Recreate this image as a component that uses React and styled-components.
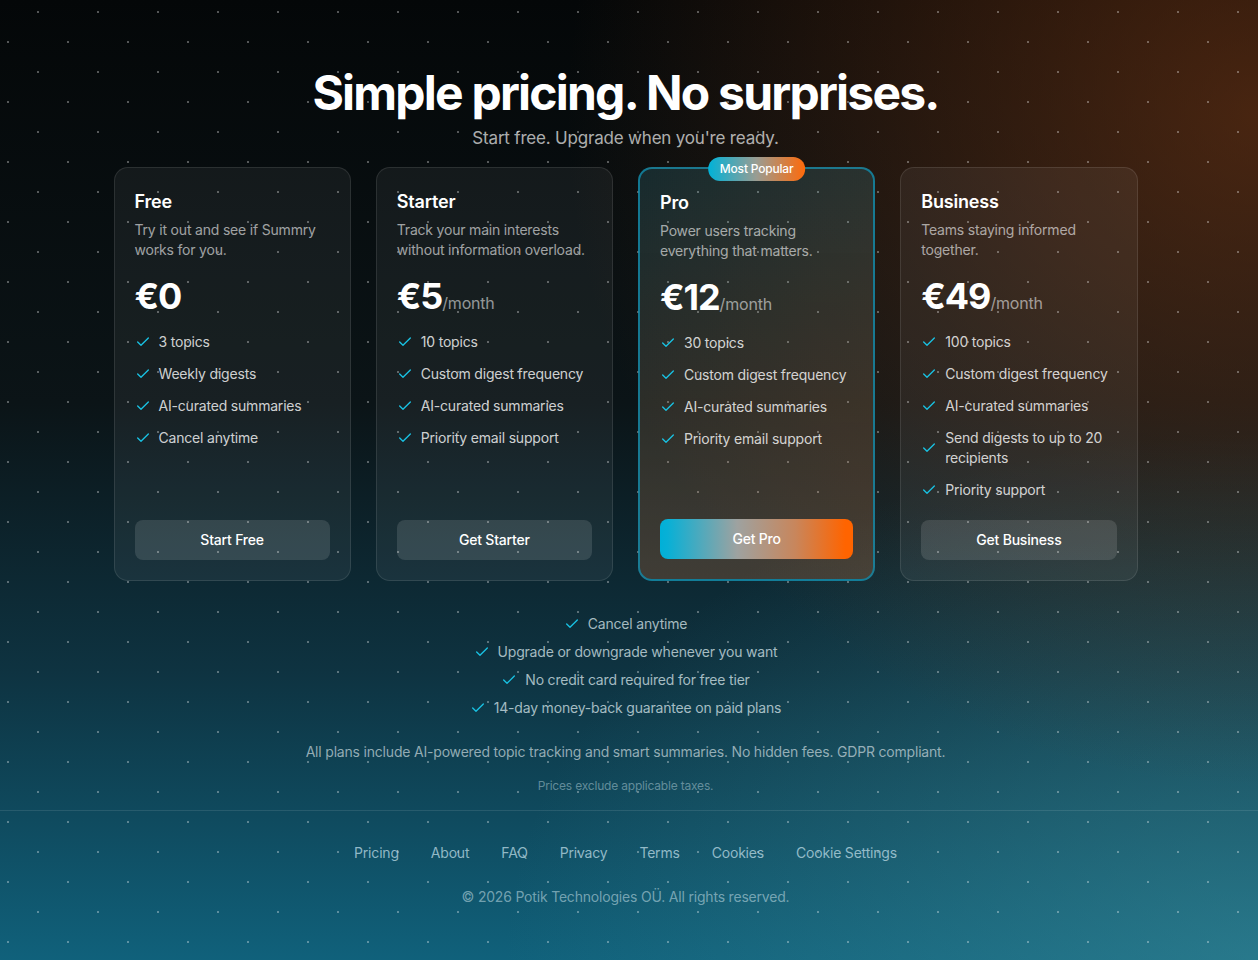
import React from "react";
import styled, { createGlobalStyle } from "styled-components";

const GlobalStyle = createGlobalStyle`
  * {
    box-sizing: border-box;
  }
  html, body {
    margin: 0;
    padding: 0;
    background: #05090b;
  }
  body {
    font-family: Inter, "Noto Sans", "Liberation Sans", sans-serif;
    letter-spacing: -0.012em;
    color: #fff;
    -webkit-font-smoothing: antialiased;
  }
`;

const Page = styled.div`
  min-height: 100vh;
  display: flex;
  flex-direction: column;
  padding-right: 7px;
  background-color: #05090b;
  background-image:
    radial-gradient(circle at center, rgba(255, 255, 255, 0.32) 1px, transparent 1.2px),
    radial-gradient(circle at center, rgba(255, 255, 255, 0.32) 1px, transparent 1.2px),
    radial-gradient(ellipse 55% 70% at 100% 12%, rgba(120, 56, 20, 0.58), transparent 100%),
    radial-gradient(ellipse 60% 55% at 100% 100%, rgba(70, 150, 160, 0.45), transparent 100%),
    linear-gradient(180deg, #040708 0%, #0b1417 42%, #0e3341 70%, #10617b 100%);
  background-size: 60px 60px, 60px 60px, 100% 100%, 100% 100%, 100% 100%;
  background-position: 8px -18px, -22px 12px, 0 0, 0 0, 0 0;
`;

const Main = styled.main`
  width: 100%;
  max-width: 1024px;
  margin: 0 auto;
  padding-top: 64px;
  display: flex;
  flex-direction: column;
  align-items: center;
`;

const Title = styled.h1`
  margin: 0;
  font-size: 48px;
  line-height: 1.2;
  font-weight: 700;
  letter-spacing: -0.037em;
  text-align: center;
`;

const Subtitle = styled.p`
  margin: 2px 0 0;
  font-size: 17px;
  line-height: 28px;
  color: rgba(255, 255, 255, 0.68);
  text-align: center;
`;

const Grid = styled.div`
  width: 100%;
  margin-top: 15px;
  display: grid;
  grid-template-columns: repeat(4, 1fr);
  gap: 25px;
`;

const Card = styled.div`
  position: relative;
  display: flex;
  flex-direction: column;
  padding: 20px;
  border-radius: 14px;
  border: ${(p) => (p.$featured ? "2px solid rgba(18, 140, 172, 0.8)" : "1px solid rgba(255, 255, 255, 0.1)")};
  background: ${(p) =>
    p.$featured
      ? "linear-gradient(180deg, rgba(0, 180, 216, 0.1) 0%, rgba(255, 110, 20, 0.17) 100%), rgba(255, 255, 255, 0.05)"
      : "rgba(255, 255, 255, 0.055)"};
`;

const Badge = styled.span`
  position: absolute;
  top: -12px;
  left: 50%;
  transform: translateX(-50%);
  height: 24px;
  padding: 0 12px;
  border-radius: 999px;
  display: flex;
  align-items: center;
  white-space: nowrap;
  font-size: 12px;
  font-weight: 500;
  color: #fff;
  background: linear-gradient(90deg, #00b2d8 0%, #9a9c92 50%, #ff6a0a 100%);
`;

const PlanName = styled.h3`
  margin: 0;
  font-size: 18px;
  line-height: 28px;
  font-weight: 600;
`;

const Description = styled.p`
  margin: 4px 0 0;
  font-size: 14px;
  line-height: 20px;
  color: rgba(255, 255, 255, 0.6);
`;

const PriceRow = styled.div`
  margin-top: 16px;
  display: flex;
  align-items: baseline;
`;

const Amount = styled.span`
  font-size: 36px;
  line-height: 40px;
  font-weight: 700;
  letter-spacing: -0.03em;
`;

const Period = styled.span`
  font-size: 16px;
  color: rgba(255, 255, 255, 0.55);
`;

const Features = styled.ul`
  list-style: none;
  margin: 16px 0 0;
  padding: 0;
  display: flex;
  flex-direction: column;
  gap: 12px;
`;

const Feature = styled.li`
  display: flex;
  align-items: center;
  gap: 8px;
  font-size: 14px;
  line-height: 20px;
  color: rgba(255, 255, 255, 0.8);
`;

const CheckIcon = styled.svg`
  flex: none;
  width: 16px;
  height: 16px;
  color: #19c2e3;
`;

const ButtonWrap = styled.div`
  margin-top: auto;
  padding-top: 20px;
`;

const PlanButton = styled.button`
  width: 100%;
  height: 40px;
  border: none;
  border-radius: 8px;
  font-family: inherit;
  font-size: 14px;
  font-weight: 500;
  letter-spacing: inherit;
  color: #fff;
  cursor: pointer;
  background: ${(p) =>
    p.$featured
      ? "linear-gradient(90deg, #00b0d8 0%, #08b0d6 4%, #9ea2a0 40%, #c8865c 70%, #ff6400 96%)"
      : "rgba(255, 255, 255, 0.12)"};
`;

const Perks = styled.ul`
  list-style: none;
  margin: 33px 0 0;
  padding: 0;
  display: flex;
  flex-direction: column;
  align-items: center;
  gap: 8px;
`;

const Perk = styled.li`
  display: flex;
  align-items: center;
  gap: 8px;
  font-size: 14px;
  line-height: 20px;
  color: rgba(210, 225, 230, 0.78);
`;

const Note = styled.p`
  margin: 24px 0 0;
  font-size: 14px;
  line-height: 20px;
  color: rgba(200, 215, 220, 0.72);
  text-align: center;
`;

const SmallNote = styled.p`
  margin: 16px 0 0;
  font-size: 12px;
  line-height: 16px;
  color: rgba(170, 200, 210, 0.55);
  text-align: center;
`;

const Footer = styled.footer`
  margin-top: 16px;
  margin-right: -7px;
  padding: 32px 7px 40px 0;
  border-top: 1px solid rgba(255, 255, 255, 0.1);
  display: flex;
  flex-direction: column;
  align-items: center;
  gap: 24px;
`;

const FooterNav = styled.nav`
  display: flex;
  gap: 32px;
`;

const FooterLink = styled.a`
  font-size: 14px;
  line-height: 20px;
  color: rgba(190, 220, 230, 0.75);
  text-decoration: none;
`;

const Copyright = styled.p`
  margin: 0;
  font-size: 14px;
  line-height: 20px;
  color: rgba(180, 210, 220, 0.62);
`;

const Check = () => (
  <CheckIcon viewBox="0 0 24 24" fill="none" stroke="currentColor" strokeWidth="2" strokeLinecap="round" strokeLinejoin="round">
    <polyline points="20 6 9 17 4 12" />
  </CheckIcon>
);

const plans = [
  {
    name: "Free",
    description: "Try it out and see if Summry works for you.",
    price: "€0",
    period: null,
    features: ["3 topics", "Weekly digests", "AI-curated summaries", "Cancel anytime"],
    cta: "Start Free",
  },
  {
    name: "Starter",
    description: "Track your main interests without information overload.",
    price: "€5",
    period: "/month",
    features: ["10 topics", "Custom digest frequency", "AI-curated summaries", "Priority email support"],
    cta: "Get Starter",
  },
  {
    name: "Pro",
    description: "Power users tracking everything that matters.",
    price: "€12",
    period: "/month",
    features: ["30 topics", "Custom digest frequency", "AI-curated summaries", "Priority email support"],
    cta: "Get Pro",
    featured: true,
  },
  {
    name: "Business",
    description: "Teams staying informed together.",
    price: "€49",
    period: "/month",
    features: [
      "100 topics",
      "Custom digest frequency",
      "AI-curated summaries",
      "Send digests to up to 20 recipients",
      "Priority support",
    ],
    cta: "Get Business",
  },
];

const perks = [
  "Cancel anytime",
  "Upgrade or downgrade whenever you want",
  "No credit card required for free tier",
  "14-day money-back guarantee on paid plans",
];

const links = ["Pricing", "About", "FAQ", "Privacy", "Terms", "Cookies", "Cookie Settings"];

const App = () => {
  return (
    <>
      <GlobalStyle />
      <Page>
        <Main>
          <Title>Simple pricing. No surprises.</Title>
          <Subtitle>Start free. Upgrade when you're ready.</Subtitle>

          <Grid>
            {plans.map((plan) => (
              <Card key={plan.name} $featured={plan.featured}>
                {plan.featured && <Badge>Most Popular</Badge>}
                <PlanName>{plan.name}</PlanName>
                <Description>{plan.description}</Description>
                <PriceRow>
                  <Amount>{plan.price}</Amount>
                  {plan.period && <Period>{plan.period}</Period>}
                </PriceRow>
                <Features>
                  {plan.features.map((f) => (
                    <Feature key={f}>
                      <Check />
                      <span>{f}</span>
                    </Feature>
                  ))}
                </Features>
                <ButtonWrap>
                  <PlanButton $featured={plan.featured}>{plan.cta}</PlanButton>
                </ButtonWrap>
              </Card>
            ))}
          </Grid>

          <Perks>
            {perks.map((p) => (
              <Perk key={p}>
                <Check />
                {p}
              </Perk>
            ))}
          </Perks>

          <Note>
            All plans include AI-powered topic tracking and smart summaries. No hidden fees. GDPR compliant.
          </Note>
          <SmallNote>Prices exclude applicable taxes.</SmallNote>
        </Main>

        <Footer>
          <FooterNav>
            {links.map((l) => (
              <FooterLink key={l} href="#">
                {l}
              </FooterLink>
            ))}
          </FooterNav>
          <Copyright>© 2026 Potik Technologies OÜ. All rights reserved.</Copyright>
        </Footer>
      </Page>
    </>
  );
};

export default App;
